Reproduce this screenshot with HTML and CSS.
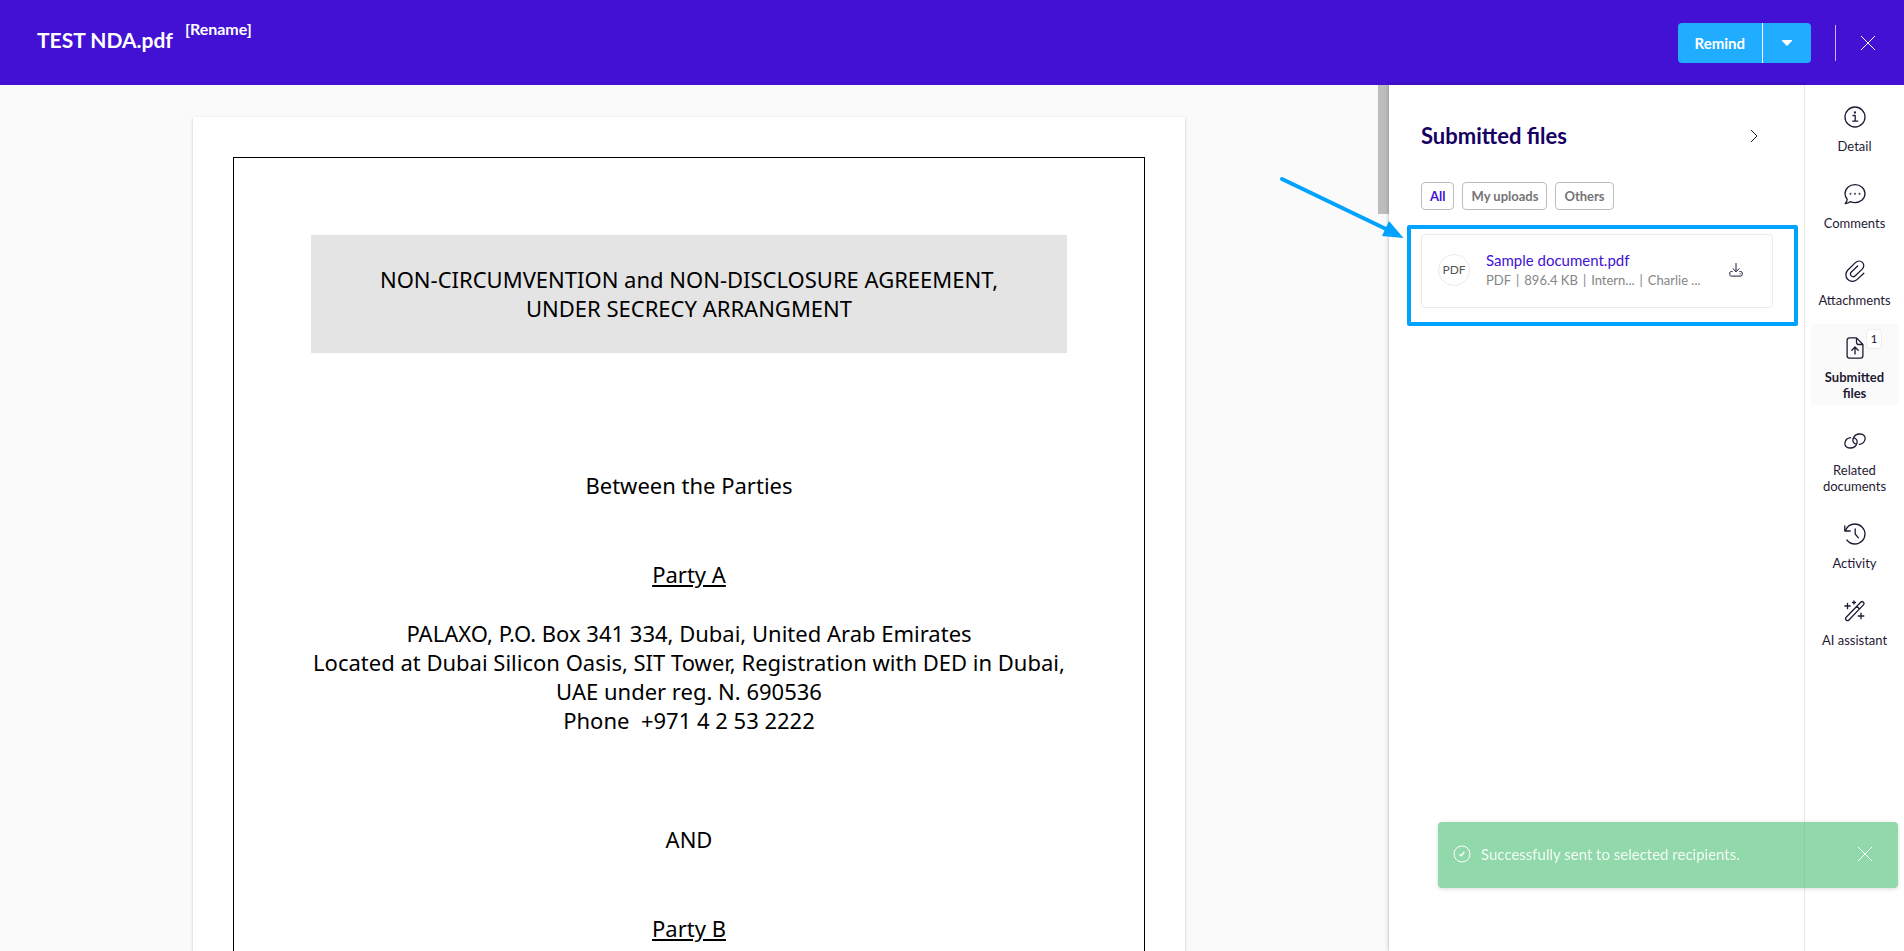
FILE: index.html
```html
<!DOCTYPE html>
<html lang="en">
<head>
    <meta charset="UTF-8">
    <meta name="viewport" content="width=device-width, initial-scale=1.0">
    <title>TEST NDA.pdf</title>
    <link rel="stylesheet" href="styles.css">
</head>
<body>
    <header class="topbar">
        <div class="doc-name">
            <h1>TEST NDA.pdf</h1>
            <a href="#" class="rename">[Rename]</a>
        </div>
        <div class="topbar-actions">
            <div class="split-button">
                <button class="remind">Remind</button>
                <button class="remind-more" aria-label="More options">
                    <svg width="12" height="8" viewBox="0 0 12 8"><path d="M1.5 1h9c.6 0 .8.6.4 1L6.6 6.5a.9.9 0 0 1-1.2 0L1.1 2c-.4-.4-.2-1 .4-1z" fill="#fff"/></svg>
                </button>
            </div>
            <span class="divider"></span>
            <button class="icon-button" aria-label="Close">
                <svg width="16" height="16" viewBox="0 0 16 16" fill="none" stroke="#fff"><path d="M1 1l14 14M15 1L1 15"/></svg>
            </button>
        </div>
    </header>

    <main class="workspace">
        <section class="viewer">
            <article class="page">
                <div class="page-frame">
                    <p class="page-title">NON-CIRCUMVENTION and NON-DISCLOSURE AGREEMENT,<br>UNDER SECRECY ARRANGMENT</p>
                    <p class="between">Between the Parties</p>
                    <p class="party">Party A</p>
                    <p class="address">PALAXO, P.O. Box 341 334, Dubai, United Arab Emirates<br>Located at Dubai Silicon Oasis, SIT Tower, Registration with DED in Dubai,<br>UAE under reg. N. 690536<br>Phone&nbsp; +971 4 2 53 2222</p>
                    <p class="and">AND</p>
                    <p class="party">Party B</p>
                </div>
            </article>
        </section>
        <div class="scrollbar"><div class="scrollbar-thumb"></div></div>

        <aside class="panel">
            <div class="panel-head">
                <h2>Submitted files</h2>
                <button class="icon-button collapse" aria-label="Collapse panel">
                    <svg width="8" height="14" viewBox="0 0 8 14" fill="none" stroke="#1f1a35"><path d="M1 1l6 6-6 6"/></svg>
                </button>
            </div>
            <div class="filters">
                <button class="filter active">All</button>
                <button class="filter">My uploads</button>
                <button class="filter">Others</button>
            </div>
            <div class="file-card">
                <span class="file-type">PDF</span>
                <div class="file-info">
                    <a href="#" class="file-name">Sample document.pdf</a>
                    <div class="file-meta">
                        <span>PDF</span><span>896.4 KB</span><span>Intern...</span><span>Charlie ...</span>
                    </div>
                </div>
                <button class="icon-button" aria-label="Download">
                    <svg width="14" height="14" viewBox="0 0 14 14" fill="none" stroke="#1f1a35" stroke-linecap="round" stroke-linejoin="round"><path d="M7 .5v8M4 5.700l3 3 3-3M3.200 8.500H2.300C1.400 8.500.8 9.200.8 10v1.700c0 .8.600 1.400 1.500 1.400h9.400c.9 0 1.500-.6 1.500-1.400V10c0-.8-.6-1.500-1.500-1.500h-.9M11 10.900h.2"/></svg>
                </button>
                <div class="highlight"></div>
                <svg class="arrow" width="126" height="64" viewBox="0 0 126 64"><path d="M4 5l104 50" stroke="#00a2ff" stroke-width="4" stroke-linecap="round"/><path d="M111 47l14.500 17-21.500-2z" fill="#00a2ff"/></svg>
            </div>
        </aside>

        <nav class="rail">
            <button class="rail-item">
                <svg class="rail-icon" viewBox="0 0 22 22"><circle cx="11" cy="11" r="10"/><path d="M9 9.500h2.200v5.500M8.700 15.200h5"/><circle cx="11" cy="6.500" r=".5" class="dot"/></svg>
                Detail
            </button>
            <button class="rail-item">
                <svg class="rail-icon" viewBox="0 0 22 22"><path d="M3.200 16.200C1.800 14.600 1 12.600 1 10.600 1 5.400 5.500 1.600 11 1.600s10 3.800 10 9-4.500 9-10 9c-1.700 0-3.200-.3-4.600-1-1.500 1.400-3.200 2-5.200 2.100 1.300-1.200 2-2.700 2-4.500z"/><circle cx="6.500" cy="10.700" r=".3" class="dot"/><circle cx="11" cy="10.700" r=".3" class="dot"/><circle cx="15.500" cy="10.700" r=".3" class="dot"/></svg>
                Comments
            </button>
            <button class="rail-item">
                <svg class="rail-icon" viewBox="0 0 22 22"><path d="M19.800 13.200l-6.500 6.200c-2.900 2.700-7.200 2.600-9.700-.1-2.500-2.700-2.200-6.800.5-9.500l7.300-7.200c2-1.900 5.100-2.100 7-.2 1.900 1.900 1.700 4.800-.2 6.700l-6.900 6.700c-1.200 1.100-2.900 1.200-4 .1-1.100-1.100-1-2.800.1-3.900l6.200-6"/></svg>
                Attachments
            </button>
            <button class="rail-item selected">
                <svg class="rail-icon" viewBox="0 0 22 22"><path d="M12.500.9H5.400c-1.300 0-2.300 1-2.300 2.300v15.600c0 1.300 1 2.300 2.300 2.300h11.200c1.300 0 2.300-1 2.300-2.300V7.500zM12.500.9v4.400c0 1.200 1 2.200 2.200 2.200h4.200M11 17v-6.800M7.800 13.200L11 10l3.200 3.200"/></svg>
                Submitted files
                <span class="badge">1</span>
            </button>
            <button class="rail-item">
                <svg class="rail-icon" viewBox="0 0 22 22"><path d="M12.300 14.200c-2.800-.5-3.900-2.900-3.200-5.400C10 5.800 13 3.900 16.200 4c3.200.1 5.300 2.200 4.900 5-.4 2.700-2.700 4.900-5.700 5.300M9.700 7.800c2.800.5 3.900 2.900 3.200 5.400-.9 3-3.900 4.900-7.100 4.800-3.200-.1-5.300-2.200-4.900-5 .4-2.700 2.700-4.900 5.700-5.300"/></svg>
                Related documents
            </button>
            <button class="rail-item">
                <svg class="rail-icon" viewBox="0 0 22 22"><path d="M.8 2.800V8h5.400M1.500 7.600C3 3.700 6.600 1 10.800 1 16.500 1 21 5.500 21 11s-4.500 10-10 10c-3.400 0-6.300-1.600-8.100-4M11.200 6v5l3.200 3.800"/></svg>
                Activity
            </button>
            <button class="rail-item">
                <svg class="rail-icon" viewBox="0 0 22 22"><path d="M2.200 17.300L16.700 2.200c.8-.8 1.900-.8 2.700 0s.8 1.900 0 2.700L4.900 20c-.8.800-1.900.8-2.700 0s-.8-1.900 0-2.700zM12.800 6.200L15.500 9M.8 6h5.400M3.500 3.300v5.400M8.500 2.500h3M10 1v3M14.200 16h5.600M17 13.200v5.600"/></svg>
                AI assistant
            </button>
        </nav>
    </main>

    <div class="toast" role="status">
        <svg width="18" height="18" viewBox="0 0 18 18" fill="none" stroke="#fff"><circle cx="9" cy="9" r="8"/><path d="M6.500 9.300l1.700 1.500 3-3.800" stroke-width="1.400"/></svg>
        <span class="toast-text">Successfully sent to selected recipients.</span>
        <button class="icon-button" aria-label="Dismiss">
            <svg width="16" height="16" viewBox="0 0 16 16" fill="none" stroke="#fff"><path d="M1 1l14 14M15 1L1 15"/></svg>
        </button>
    </div>
</body>
</html>
```
FILE: styles.css
```css
* {
    box-sizing: border-box;
}
body {
    margin: 0;
    height: 100vh;
    display: flex;
    flex-direction: column;
    overflow: hidden;
    font-family: Lato, sans-serif;
    font-size: 14px;
    color: #1f1a35;
    background-color: #fafafa;
}
h1, h2, p {
    margin: 0;
}
button {
    font: inherit;
    color: inherit;
    margin: 0;
    padding: 0;
    border: none;
    background: none;
    cursor: pointer;
}
svg {
    display: block;
}
a {
    text-decoration: none;
}

/* top bar */
.topbar {
    flex: none;
    display: flex;
    justify-content: space-between;
    height: 85px;
    padding: 0 28px 0 37px;
    background-color: #4211d4;
    color: #fff;
}
.doc-name {
    display: flex;
    align-items: flex-start;
    gap: 12px;
    padding-top: 20px;
}
.doc-name h1 {
    font-size: 21px;
    line-height: 40px;
    font-weight: 700;
}
.rename {
    color: #fff;
    font-size: 16px;
    font-weight: 700;
    line-height: 18px;
}
.topbar-actions {
    display: flex;
    align-items: center;
    gap: 24px;
}
.split-button {
    display: flex;
    height: 40px;
    border-radius: 4px;
    overflow: hidden;
    background-color: #20adff;
}
.remind {
    padding: 0 17px;
    font-size: 15px;
    font-weight: 700;
}
.remind-more {
    padding: 0 18px;
    border-left: 1px solid #fff;
}
.divider {
    width: 1px;
    height: 36px;
    background-color: #c6b7f2;
}

/* layout */
.workspace {
    flex: 1;
    min-height: 0;
    display: flex;
}
.viewer {
    flex: 1;
    overflow: hidden;
    padding-top: 32px;
}
.scrollbar {
    width: 11px;
}
.scrollbar-thumb {
    height: 129px;
    background-color: #bdbdbd;
}

/* document page */
.page {
    max-width: 992px;
    margin: 0 auto;
    padding: 40px;
    background-color: #fff;
    box-shadow: 0 1px 3px rgba(0, 0, 0, 0.2);
    font-family: "Noto Sans", sans-serif;
    font-size: 22px;
    line-height: 29px;
    color: #000;
    text-align: center;
}
.page-frame {
    min-height: 1200px;
    padding: 77px;
    border: 1px solid #000;
}
.page-title {
    padding: 30px 0;
    background-color: #e4e4e4;
}
.between {
    margin-top: 118px;
}
.party {
    margin-top: 60px;
    text-decoration: underline;
}
.address {
    margin: 30px -10px 0;
}
.and {
    margin-top: 90px;
}

/* side panel */
.panel {
    position: relative;
    width: 415px;
    padding: 31px 31px 0 32px;
    background-color: #fff;
    box-shadow: 0 0 4px rgba(0, 0, 0, 0.3);
}
.panel-head {
    display: flex;
    align-items: center;
    justify-content: space-between;
    padding-right: 15px;
}
.panel-head h2 {
    font-size: 22px;
    line-height: 40px;
    color: #150064;
}
.filters {
    display: flex;
    gap: 8px;
    margin: 26px 0 24px;
}
.filter {
    height: 28px;
    padding: 0 8px;
    border: 1px solid #bdbdbd;
    border-radius: 4px;
    font-size: 13px;
    font-weight: 700;
    color: #757575;
}
.filter.active {
    color: #4211d4;
}
.file-card {
    position: relative;
    display: flex;
    align-items: center;
    gap: 16px;
    height: 74px;
    padding: 0 29px 2px 16px;
    border: 1px solid #ebebeb;
    border-radius: 4px;
}
.file-type {
    width: 32px;
    height: 32px;
    border: 1px solid #ebebeb;
    border-radius: 50%;
    font-size: 12px;
    line-height: 30px;
    text-align: center;
    color: #555;
}
.file-info {
    flex: 1;
}
.file-name {
    display: block;
    font-size: 15px;
    line-height: 20px;
    color: #4211d4;
}
.file-meta {
    display: flex;
    font-size: 13px;
    line-height: 20px;
    color: #858585;
    white-space: nowrap;
}
.file-meta span + span::before {
    content: "|";
    margin: 0 5px;
}
.highlight {
    position: absolute;
    inset: -10px -26px -19px -15px;
    border: 4px solid #00a2ff;
    border-radius: 2px;
}
.arrow {
    position: absolute;
    left: -144px;
    top: -61px;
}

/* right rail */
.rail {
    z-index: 1;
    width: 100px;
    display: flex;
    flex-direction: column;
    gap: 12px;
    padding: 8px 6px 0;
    border-left: 1px solid #e8e8e8;
    background-color: #fff;
}
.rail-item {
    position: relative;
    padding: 13px 6px 4px;
    font-size: 13px;
    line-height: 16px;
}
.rail-item.selected {
    background-color: #fafafa;
    font-weight: 700;
}
.rail-icon {
    width: 22px;
    height: 22px;
    margin: 0 auto 10px;
    fill: none;
    stroke: #1f1a35;
    stroke-width: 1.3;
    stroke-linecap: round;
    stroke-linejoin: round;
}
.rail-icon .dot {
    fill: #1f1a35;
}
.badge {
    position: absolute;
    top: 5px;
    right: 16px;
    width: 16px;
    height: 20px;
    border: 1px solid #ededed;
    border-radius: 4px;
    background-color: #fff;
    font-size: 12px;
    line-height: 18px;
    font-weight: 400;
}

/* notification */
.toast {
    position: fixed;
    z-index: 2;
    right: 6px;
    bottom: 63px;
    width: 460px;
    height: 66px;
    display: flex;
    align-items: center;
    gap: 10px;
    padding: 0 25px 2px 15px;
    border-radius: 4px;
    background-color: rgba(72, 190, 113, 0.6);
    box-shadow: 0 1px 4px rgba(0, 0, 0, 0.15);
    color: #f1fbf4;
}
.toast-text {
    flex: 1;
    font-size: 15px;
}
```
